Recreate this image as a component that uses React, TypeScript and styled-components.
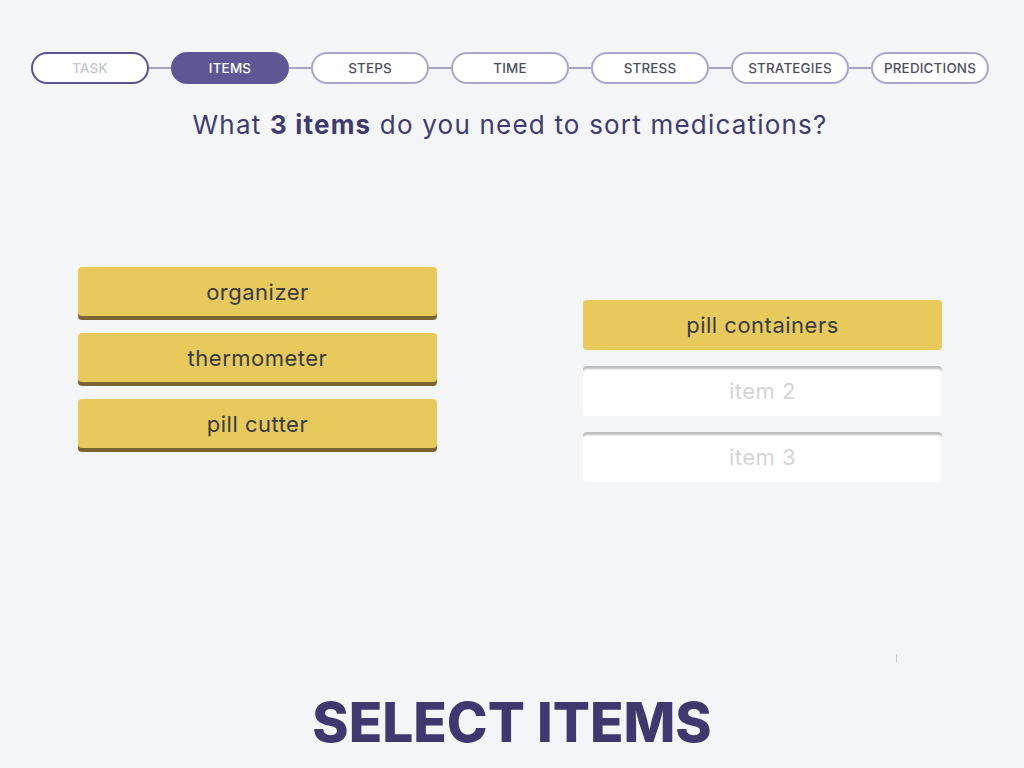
import React from 'react'
import styled, { createGlobalStyle } from 'styled-components'

const GlobalStyle = createGlobalStyle`
  html, body {
    margin: 0;
    padding: 0;
    background: #f4f5f7;
  }
  body {
    font-family: Inter, "Noto Sans", sans-serif;
  }
`

const Page = styled.div`
  width: 1024px;
  height: 768px;
  display: flex;
  flex-direction: column;
  align-items: center;
  position: relative;
  overflow: hidden;
`

const Stepper = styled.div`
  display: flex;
  align-items: center;
  margin: 52px 4px 0 0;
`

const Connector = styled.div`
  width: 22px;
  height: 2px;
  background: #a8a4c8;
`

const Step = styled.div<{ $state: 'done' | 'active' | 'todo' }>`
  width: 118px;
  height: 32px;
  box-sizing: border-box;
  border-radius: 16px;
  display: flex;
  align-items: center;
  justify-content: center;
  font-size: 13.4px;
  font-weight: 500;
  letter-spacing: 0.2px;
  border: 2px solid
    ${({ $state }) => ($state === 'done' ? '#5a528f' : $state === 'active' ? '#5e5695' : '#aaa6c9')};
  background: ${({ $state }) => ($state === 'active' ? '#5e5695' : '#ffffff')};
  color: ${({ $state }) => ($state === 'done' ? '#c4c4ca' : $state === 'active' ? '#ffffff' : '#4b4f5c')};
`

const Question = styled.h1`
  margin: 25px 4px 0 0;
  font-size: 26px;
  font-weight: 400;
  color: #403a72;
  letter-spacing: 1.2px;

  b {
    font-weight: 700;
  }
`

const Board = styled.div`
  align-self: stretch;
  display: grid;
  grid-template-columns: 359px 359px;
  column-gap: 146px;
  padding-left: 78px;
  margin-top: 127px;
`

const Column = styled.div<{ $offset: number; $gap: number }>`
  display: flex;
  flex-direction: column;
  gap: ${({ $gap }) => $gap}px;
  margin-top: ${({ $offset }) => $offset}px;
`

const Tile = styled.div<{ $kind: 'option' | 'chosen' | 'empty' }>`
  height: ${({ $kind }) => ($kind === 'option' ? '49px' : '50px')};
  border-radius: 4px;
  display: flex;
  align-items: center;
  justify-content: center;
  font-size: 22px;
  letter-spacing: 0.5px;
  background: ${({ $kind }) => ($kind === 'empty' ? '#ffffff' : '#e8ca5c')};
  color: ${({ $kind }) => ($kind === 'empty' ? '#d4d4d8' : '#3a3a3c')};
  box-shadow: ${({ $kind }) =>
    $kind === 'option'
      ? '0 4px 0 #7a6532'
      : $kind === 'empty'
        ? 'inset 0 4px 2px -1px #bdbdc0'
        : 'none'};
  margin-bottom: ${({ $kind }) => ($kind === 'option' ? '4px' : '0')};
`

const Spacer = styled.div`
  flex: 1;
`

const Title = styled.div`
  font-size: 55px;
  font-weight: 800;
  color: #3f386f;
  letter-spacing: 0;
  margin-bottom: 13px;
`

const Tick = styled.div`
  position: absolute;
  left: 896px;
  top: 654px;
  width: 1px;
  height: 8px;
  background: #c8c8cc;
`

const steps = ['TASK', 'ITEMS', 'STEPS', 'TIME', 'STRESS', 'STRATEGIES', 'PREDICTIONS']
const options = ['organizer', 'thermometer', 'pill cutter']

export default function App() {
  return (
    <>
      <GlobalStyle />
      <Page>
        <Stepper>
          {steps.map((s, i) => (
            <React.Fragment key={s}>
              {i > 0 && <Connector />}
              <Step $state={i === 0 ? 'done' : i === 1 ? 'active' : 'todo'}>{s}</Step>
            </React.Fragment>
          ))}
        </Stepper>
        <Question>
          What <b>3 items</b> do you need to sort medications?
        </Question>
        <Board>
          <Column $offset={0} $gap={13}>
            {options.map(o => (
              <Tile key={o} $kind="option">
                {o}
              </Tile>
            ))}
          </Column>
          <Column $offset={33} $gap={16}>
            <Tile $kind="chosen">pill containers</Tile>
            <Tile $kind="empty">item 2</Tile>
            <Tile $kind="empty">item 3</Tile>
          </Column>
        </Board>
        <Spacer />
        <Title>SELECT ITEMS</Title>
        <Tick />
      </Page>
    </>
  )
}
